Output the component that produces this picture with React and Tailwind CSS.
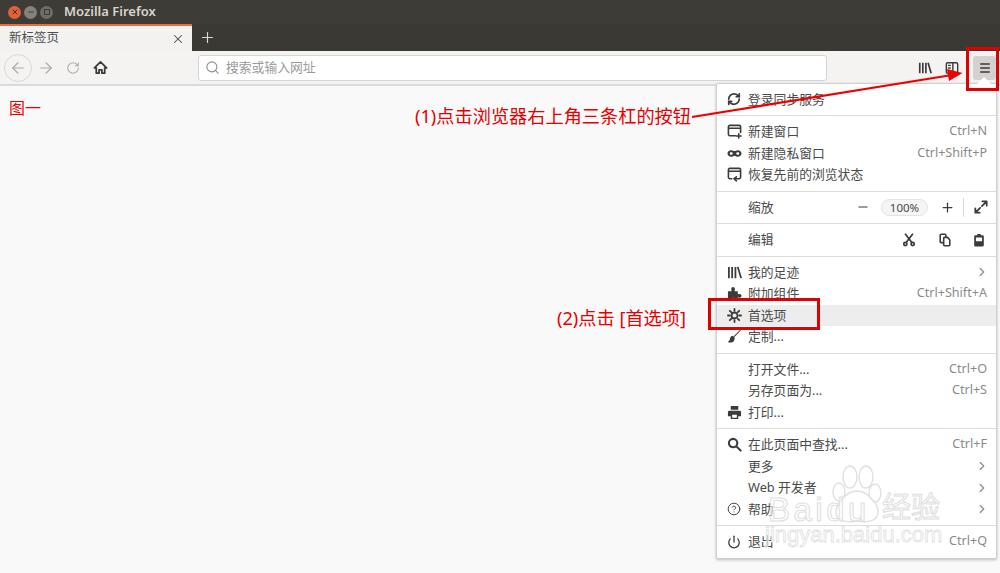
import React from 'react';
import { ArrowLeft, ArrowRight, RotateCw, Search, X, Plus, Minus, ChevronRight, CircleHelp, Power, RefreshCw } from 'lucide-react';

const font = 'font-["Noto_Sans","Noto_Sans_CJK_SC",sans-serif]';

// Firefox photon style icons, stroke based
const Stroke = ({ children, size = 15, sw = 1.7 }) => (
    <svg width={size} height={size} viewBox="0 0 16 16" fill="none" stroke="#3b3b3b" strokeWidth={sw} strokeLinecap="round" strokeLinejoin="round">
        {children}
    </svg>
);
const Solid = ({ children, size = 15 }) => (
    <svg width={size} height={size} viewBox="0 0 16 16" fill="#3b3b3b">{children}</svg>
);

const SyncIcon = () => <RefreshCw size={14} strokeWidth={3} className="text-[#3b3b3b]" />;
const NewWindowIcon = () => (
    <Stroke>
        <path d="M14.5 9V3A1.5 1.5 0 0 0 13 1.5H3A1.5 1.5 0 0 0 1.500 3v8A1.5 1.5 0 0 0 3 12.500h6" />
        <path d="M2 4.500h12" />
        <path d="M12.500 10.500v4.500M10 12.750h5" />
    </Stroke>
);
const MaskIcon = () => (
    <Solid>
        <path d="M4.500 4.500C2.300 4.500.500 6 .500 8s1.800 3.500 4 3.500c1.800 0 2.500-1.200 3.500-1.200s1.700 1.200 3.500 1.200c2.200 0 4-1.500 4-3.500s-1.800-3.500-4-3.500c-1.800 0-2.500.9-3.500.9s-1.700-.9-3.500-.9zm0 2.200c.9 0 1.600.5 1.600 1.300S5.400 9.300 4.500 9.300 2.900 8.800 2.900 8s.7-1.300 1.600-1.300zm7 0c.9 0 1.600.5 1.600 1.300s-.7 1.300-1.600 1.300S9.900 8.800 9.900 8s.7-1.300 1.600-1.300z" fillRule="evenodd" />
    </Solid>
);
const RestoreIcon = () => (
    <Stroke>
        <path d="M5 12.500H3A1.500 1.500 0 0 1 1.500 11V3A1.500 1.500 0 0 1 3 1.500h10A1.500 1.500 0 0 1 14.500 3v8a1.500 1.500 0 0 1-1.500 1.500H8" />
        <path d="M2 4.500h12" />
        <path d="M10 10.500 7.500 12.500 10 14.800" />
    </Stroke>
);
const LibraryIcon = ({ size = 15 }) => (
    <Stroke size={size} sw={1.9}>
        <path d="M2 2v12M5.500 2v12M9 2v12M11.500 2l3.500 12" strokeLinecap="butt" />
    </Stroke>
);
const PuzzleIcon = () => (
    <Solid>
        <path d="M1 5.500h4C4.300 4.300 4.200 1 6.500 1S8.700 4.300 8 5.500h3.500V9c1.200-.7 4-.7 4 1.500s-2.800 2.200-4 1.500v3H8c.7-1.200.6-2.500-1.500-2.500S4.800 13.800 5.500 15H1z" />
    </Solid>
);
const GearIcon = () => (
    <Stroke sw={1.9}>
        <circle cx="8" cy="8" r="3.200" />
        <path d="M8 1v2M8 13v2M1 8h2M13 8h2M3 3l1.500 1.500M11.500 11.500 13 13M3 13l1.500-1.500M11.500 4.500 13 3" />
    </Stroke>
);
const BrushIcon = () => (
    <svg width="15" height="15" viewBox="0 0 16 16" fill="#3b3b3b">
        <path d="M15 1 8 8.500l-.9-.9L14.300.6z" />
        <path d="M8.200 9.200 6.300 7.300C4.500 7.500 3.600 8.500 3.300 10.200 3 12 2.200 13 1 13.500c1 1.200 4 1.400 5.700 0 1-.9 1.500-2.400 1.500-4.300z" />
    </svg>
);
const PrinterIcon = () => (
    <Solid>
        <path d="M4 1h8v4H4zM2.500 6h11A1.500 1.500 0 0 1 15 7.500V12h-3v3H4v-3H1V7.500A1.500 1.500 0 0 1 2.500 6zM5.500 10.500v3h5v-3z" fillRule="evenodd" />
    </Solid>
);
const SearchIcon = () => (
    <Stroke sw={2.2}>
        <circle cx="6.500" cy="6.500" r="4.500" />
        <path d="m10 10 4.500 4.500" />
    </Stroke>
);
const ScissorsIcon = () => (
    <Stroke size={14} sw={2}>
        <path d="M4 1.500 11 10.500M12 1.500 5 10.500" />
        <circle cx="3.800" cy="12.500" r="1.800" />
        <circle cx="12.200" cy="12.500" r="1.800" />
    </Stroke>
);
const CopyIcon = () => (
    <Stroke size={14} sw={1.8}>
        <path d="M9 5V2.500A1 1 0 0 0 8 1.500H3.500a1 1 0 0 0-1 1V10a1 1 0 0 0 1 1H6" />
        <path d="M6.500 6a1 1 0 0 1 1-1H11l2.500 3v5.500a1 1 0 0 1-1 1h-5a1 1 0 0 1-1-1z" fill="#fff" />
    </Stroke>
);
const ClipboardIcon = () => (
    <Solid size={14}>
        <path d="M6 1h4v1.500h2A1.500 1.500 0 0 1 13.500 4v10a1.500 1.500 0 0 1-1.500 1.500H4A1.500 1.500 0 0 1 2.500 14V4A1.500 1.500 0 0 1 4 2.500h2zM4.500 5v4.500h7V5z" fillRule="evenodd" />
    </Solid>
);
const ExpandIcon = () => (
    <Stroke size={14} sw={2}>
        <path d="M9.500 1.500h5v5M14.500 1.500 9 7M6.500 14.500h-5v-5M1.500 14.500 7 9" />
    </Stroke>
);
const HomeIcon = () => (
    <Stroke sw={1.9}>
        <path d="M8 2 1.500 8.500H3.500V14h3v-3.500h3V14h3V8.500h2z" />
    </Stroke>
);
const SidebarIcon = () => (
    <Stroke size={14} sw={1.600}>
        <rect x="1.500" y="2" width="13" height="12" rx="1.500" />
        <path d="M9 2v12" />
        <path d="M4 5h2M4 8h2M4 11h2" />
    </Stroke>
);
const MenuBars = () => (
    <Stroke size={14} sw={1.700}>
        <path d="M2.500 3.500h11M2.500 8h11M2.500 12.500h11" strokeLinecap="butt" />
    </Stroke>
);

const Row = ({ icon, label, shortcut, arrow, active }) => (
    <div className={`h-[21.5px] flex items-center pr-[9px] ${active ? 'bg-[#ededed]' : ''}`}>
        <div className="w-[31px] pl-[10px] shrink-0 flex items-center">{icon}</div>
        <span className="text-[12.8px] text-[#4a4a4a]">{label}</span>
        <div className="flex-1" />
        {shortcut && <span className="text-[12.6px] text-[#8a8a8a]">{shortcut}</span>}
        {arrow && <ChevronRight size={14} className="text-[#8a8a8a] -mr-[2px]" />}
    </div>
);

const Section = ({ children }) => (
    <div className="py-[5px] border-b border-[#dcdcdc] last:border-b-0">{children}</div>
);

const BaiduWatermark = () => (
    <div className="absolute left-[765px] top-[465px] w-[190px] h-[90px] pointer-events-none">
        <svg width="60" height="62" viewBox="0 0 60 62" className="absolute left-[65px] top-0" fill="rgba(255,255,255,0.5)" stroke="#e0e0e0" strokeWidth="1.4">
            <ellipse cx="9" cy="27" rx="6" ry="9" />
            <ellipse cx="20" cy="12" rx="7" ry="11" />
            <ellipse cx="36" cy="12" rx="7" ry="11" />
            <ellipse cx="45" cy="28" rx="6" ry="9" />
            <path d="M27 26c-10 0-21 12-21 21 0 9 10 11 21 9 11 2 21 0 21-9 0-9-11-21-21-21z" />
        </svg>
        <span className='absolute left-[3px] top-[28px] text-[33px] leading-none tracking-[3.5px] font-["Liberation_Sans",sans-serif] text-[rgba(255,255,255,0.5)] [-webkit-text-stroke:1px_#dedede]'>Baidu</span>
        <span className='absolute left-[117px] top-[26px] text-[29px] leading-none font-["Noto_Sans_CJK_SC",sans-serif] text-[rgba(255,255,255,0.5)] [-webkit-text-stroke:1px_#dedede]'>经验</span>
        <span className='absolute left-0 top-[59px] text-[22px] leading-none font-["Liberation_Sans",sans-serif] text-[rgba(255,255,255,0.5)] [-webkit-text-stroke:0.8px_#e0e0e0]'>jingyan.baidu.com</span>
    </div>
);

const App = () => {
    return (
        <div className={`relative w-[1000px] h-[573px] overflow-hidden flex flex-col bg-[#f9f9fa] ${font}`}>
            {/* Title bar */}
            <div className="h-[24px] shrink-0 bg-[#3e3c37] flex items-center pl-[8px]">
                <div className="w-[13px] h-[13px] rounded-full bg-[#e2603a] flex items-center justify-center">
                    <X size={8} strokeWidth={3} className="text-[#5a2412]" />
                </div>
                <div className="w-[13px] h-[13px] rounded-full bg-[#85827b] ml-[3px] flex items-center justify-center">
                    <Minus size={8} strokeWidth={3} className="text-[#3e3c37]" />
                </div>
                <div className="w-[13px] h-[13px] rounded-full bg-[#6f6d67] ml-[3px] flex items-center justify-center">
                    <div className="w-[6px] h-[6px] border border-[#3e3c37]" />
                </div>
                <span className="ml-[11px] text-[13px] font-semibold text-[#d8d5cf]">Mozilla Firefox</span>
            </div>

            {/* Tabs */}
            <div className="h-[27px] shrink-0 bg-[#3b3933] flex items-stretch">
                <div className="w-[192px] bg-[#f3f2f1] border-t-2 border-[#ee6a3c] flex items-center pl-[9px] pr-[7px]">
                    <span className="text-[12.5px] text-[#4d4d4d]">新标签页</span>
                    <div className="flex-1" />
                    <X size={14} strokeWidth={1.8} className="text-[#4d4d4d]" />
                </div>
                <div className="w-[30px] flex items-center justify-center">
                    <Plus size={17} strokeWidth={1.6} className="text-[#dcdad5]" />
                </div>
            </div>

            {/* Toolbar */}
            <div className="h-[35px] shrink-0 bg-[#f4f3f2] border-b-2 border-[#dcdbda] flex items-center pl-[4px]">
                <div className="w-[28px] h-[28px] rounded-full border border-[#d8d8d8] flex items-center justify-center">
                    <ArrowLeft size={18} strokeWidth={1.5} className="text-[#aaaaaa]" />
                </div>
                <ArrowRight size={18} strokeWidth={1.5} className="text-[#aaaaaa] ml-[5px]" />
                <RotateCw size={14} strokeWidth={1.8} className="text-[#aaaaaa] ml-[11px]" />
                <div className="ml-[13px] flex items-center"><HomeIcon /></div>
                <div className="ml-[90px] w-[629px] h-[26px] bg-white border border-[#d4d4d4] rounded-[3px] flex items-center pl-[6px]">
                    <Search size={15} strokeWidth={1.8} className="text-[#8e8e8e]" />
                    <span className="ml-[6px] text-[12.8px] text-[#9a9a9a]">搜索或输入网址</span>
                </div>
                <div className="ml-[91px] flex items-center"><LibraryIcon size={14} /></div>
                <div className="ml-[13px] flex items-center"><SidebarIcon /></div>
                <div className="w-[23px] h-[24px] rounded-[3px] bg-[#d3d2d1] ml-[14px] flex items-center justify-center">
                    <MenuBars />
                </div>
            </div>

            {/* Page */}
            <div className="flex-1 pl-[9px] pt-[10px]">
                <span className="text-[16px] leading-[24px] text-[#f00000]">图一</span>
            </div>

            {/* Menu panel */}
            <div className="absolute left-[716px] top-[82.7px] w-[281px] bg-white border border-[#cfcfcf] rounded-[2px] shadow-[0_1px_3px_rgba(0,0,0,0.25)]">
                <div className="absolute right-[5px] top-[-7px] w-0 h-0 border-x-[7px] border-x-transparent border-b-[7px] border-b-white" />
                <Section>
                    <Row icon={<SyncIcon />} label="登录同步服务" />
                </Section>
                <Section>
                    <Row icon={<NewWindowIcon />} label="新建窗口" shortcut="Ctrl+N" />
                    <Row icon={<MaskIcon />} label="新建隐私窗口" shortcut="Ctrl+Shift+P" />
                    <Row icon={<RestoreIcon />} label="恢复先前的浏览状态" />
                </Section>
                <Section>
                    <div className="h-[21.5px] flex items-center pr-[8px]">
                        <span className="ml-[31px] text-[12.8px] text-[#4a4a4a]">缩放</span>
                        <div className="flex-1" />
                        <Minus size={14} strokeWidth={2} className="text-[#3b3b3b]" />
                        <div className="ml-[11px] w-[47px] h-[17px] rounded-full bg-[#f5f5f5] border border-[#e3e3e3] flex items-center justify-center text-[11.5px] text-[#4a4a4a]">100%</div>
                        <Plus size={15} strokeWidth={2} className="text-[#3b3b3b] ml-[12px]" />
                        <div className="w-px h-[19px] bg-[#dcdcdc] ml-[8px]" />
                        <div className="ml-[10px] flex items-center"><ExpandIcon /></div>
                    </div>
                </Section>
                <Section>
                    <div className="h-[21.5px] flex items-center pr-[10px]">
                        <span className="ml-[31px] text-[12.8px] text-[#4a4a4a]">编辑</span>
                        <div className="flex-1" />
                        <ScissorsIcon />
                        <div className="ml-[22px] flex items-center"><CopyIcon /></div>
                        <div className="ml-[20px] flex items-center"><ClipboardIcon /></div>
                    </div>
                </Section>
                <Section>
                    <Row icon={<LibraryIcon />} label="我的足迹" arrow />
                    <Row icon={<PuzzleIcon />} label="附加组件" shortcut="Ctrl+Shift+A" />
                    <Row icon={<GearIcon />} label="首选项" active />
                    <Row icon={<BrushIcon />} label="定制..." />
                </Section>
                <Section>
                    <Row label="打开文件..." shortcut="Ctrl+O" />
                    <Row label="另存页面为..." shortcut="Ctrl+S" />
                    <Row icon={<PrinterIcon />} label="打印..." />
                </Section>
                <Section>
                    <Row icon={<SearchIcon />} label="在此页面中查找..." shortcut="Ctrl+F" />
                    <Row label="更多" arrow />
                    <Row label="Web 开发者" arrow />
                    <Row icon={<CircleHelp size={14} strokeWidth={1.6} className="text-[#3b3b3b]" />} label="帮助" arrow />
                </Section>
                <Section>
                    <Row icon={<Power size={14} strokeWidth={2.2} className="text-[#3b3b3b]" />} label="退出" shortcut="Ctrl+Q" />
                </Section>
            </div>

            <BaiduWatermark />

            {/* Red annotations */}
            <svg width="1000" height="573" className="absolute left-0 top-0 pointer-events-none">
                <line x1="692" y1="117" x2="952" y2="75" stroke="#ee0000" strokeWidth="2.2" />
                <path d="M962.500 73 947 69l2 12z" fill="#ee0000" />
            </svg>
            <div className="absolute left-[966px] top-[47px] w-[33px] h-[44px] border-[3px] border-[#e00000]" />
            <div className="absolute left-[708px] top-[298px] w-[112px] h-[32px] border-[3px] border-[#e00000]" />
            <span className="absolute left-[415px] top-[103px] text-[18.2px] leading-[26px] text-[#e60000] whitespace-nowrap">(1)点击浏览器右上角三条杠的按钮</span>
            <span className="absolute left-[557px] top-[305px] text-[18.2px] leading-[26px] text-[#e60000] whitespace-nowrap">(2)点击 [首选项]</span>
        </div>
    );
};

export default App;
